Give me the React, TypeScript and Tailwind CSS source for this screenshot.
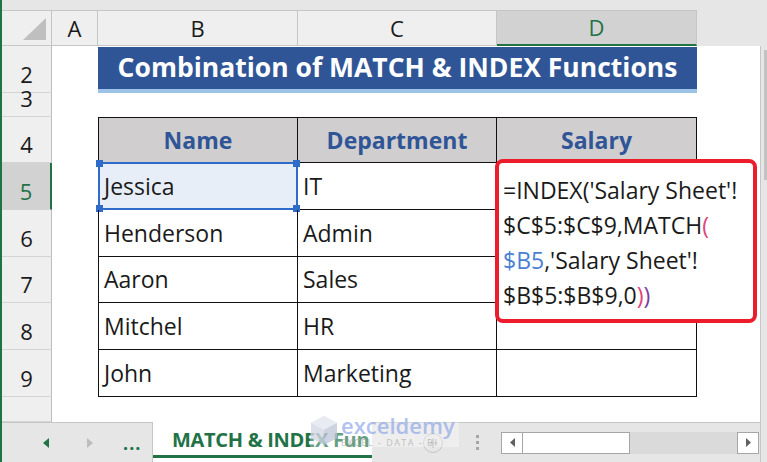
import React from "react";

const rowHeaders = [
  { label: "2", cls: "row-start-2" },
  { label: "3", cls: "row-start-3" },
  { label: "4", cls: "row-start-4" },
  { label: "5", cls: "row-start-5", active: true },
  { label: "6", cls: "row-start-6" },
  { label: "7", cls: "row-start-7" },
  { label: "8", cls: "row-start-8" },
  { label: "9", cls: "row-start-9" },
  { label: "", cls: "row-start-10" },
];

const people = [
  ["Jessica", "IT"],
  ["Henderson", "Admin"],
  ["Aaron", "Sales"],
  ["Mitchel", "HR"],
  ["John", "Marketing"],
];

function Handle({ pos }: { pos: string }) {
  return <div className={`absolute h-[7px] w-[7px] bg-[#2f6bc9] ${pos}`} />;
}

export default function App() {
  return (
    <div className="relative flex h-[462px] w-[767px] overflow-hidden bg-[#e6e6e6] font-['Open_Sans',sans-serif] text-[#1a1a1a]">
      <div className="w-[2px] bg-[#217346]" />
      <div className="flex w-[765px] flex-col">
        <div className="h-[10px]" />

        <div className="flex h-[412px]">
          {/* sheet */}
          <div className="relative grid w-[758px] grid-cols-[50px_46px_200px_199px_200px_63px] grid-rows-[36px_47px_24px_46px_47px_47px_46px_47px_47px_25px] bg-white">
            {/* column headers */}
            <div className="relative col-start-1 row-start-1 border-y border-r border-[#c6c6c6] bg-[#efefef]">
              <svg className="absolute right-[5px] bottom-[5px]" width="23" height="22" viewBox="0 0 23 22">
                <polygon points="23,0 23,22 0,22" fill="#bfbfbf" />
              </svg>
            </div>
            <div className="col-start-2 row-start-1 flex items-center justify-center border-y border-r border-[#c6c6c6] bg-[#efefef] text-[22px]">A</div>
            <div className="col-start-3 row-start-1 flex items-center justify-center border-y border-r border-[#c6c6c6] bg-[#efefef] text-[22px]">B</div>
            <div className="col-start-4 row-start-1 flex items-center justify-center border-y border-r border-[#c6c6c6] bg-[#efefef] text-[22px]">C</div>
            <div className="col-start-5 row-start-1 flex items-center justify-center border-t border-r border-[#c6c6c6] border-b-2 border-b-[#217346] bg-[#d2d2d2] text-[22px] text-[#217346]">D</div>
            <div className="col-start-6 row-start-1 bg-[#e6e6e6]" />

            {/* row headers */}
            {rowHeaders.map((r) => (
              <div
                key={r.cls}
                className={`col-start-1 ${r.cls} flex items-end justify-center border-b border-[#d4d4d4] pb-[7px] text-[22px] leading-none ${
                  r.active
                    ? "border-r-2 border-r-[#217346] bg-[#d2d2d2] text-[#217346]"
                    : "border-r border-r-[#bdbdbd] bg-[#efefef]"
                }`}
              >
                {r.label}
              </div>
            ))}

            {/* title */}
            <div className="col-start-3 col-span-3 row-start-2 mt-[1px] flex items-center justify-center border-b-4 border-[#9dc3e6] bg-[#2f5597] text-[26.5px] font-bold text-white">
              Combination of MATCH &amp; INDEX Functions
            </div>

            {/* table */}
            <div className="col-start-3 col-span-3 row-start-4 row-span-6 grid grid-cols-[200px_199px_200px] grid-rows-[46px_47px_47px_46px_47px_47px] text-[23px]">
              {["Name", "Department", "Salary"].map((h, i) => (
                <div
                  key={h}
                  className={`flex items-center justify-center border-y border-r border-[#111] bg-[#d0cece] text-[23px] font-bold text-[#2f5597] ${i === 0 ? "border-l" : ""}`}
                >
                  {h}
                </div>
              ))}
              {people.map(([name, dept], i) => (
                <React.Fragment key={name}>
                  <div className={`relative flex items-center border-b border-l border-r border-[#111] pl-[5px] ${i === 0 ? "bg-[#e8eef8]" : ""}`}>
                    {name}
                    {i === 0 && (
                      <div className="absolute top-[-1px] left-[-1px] right-[-1px] bottom-[-1px] border-2 border-[#2f6bc9]">
                        <Handle pos="-top-[4px] -left-[4px]" />
                        <Handle pos="-top-[4px] -right-[4px]" />
                        <Handle pos="-bottom-[4px] -left-[4px]" />
                        <Handle pos="-bottom-[4px] -right-[4px]" />
                      </div>
                    )}
                  </div>
                  <div className="flex items-center border-b border-r border-[#111] pl-[5px]">{dept}</div>
                  <div className="border-b border-r border-[#111]" />
                </React.Fragment>
              ))}
            </div>

            {/* formula callout */}
            <div className="absolute top-[149px] left-[493px] h-[164px] w-[262px] rounded-[8px] border-4 border-[#ec1c2c] bg-white pt-[10px] pl-[4px] text-[23px] leading-[35px] whitespace-nowrap">
              <div>=INDEX(&apos;Salary Sheet&apos;!</div>
              <div>
                $C$5:$C$9,MATCH<span className="text-[#e0457b]">(</span>
              </div>
              <div>
                <span className="text-[#4b7fd6]">$B5</span>,&apos;Salary Sheet&apos;!
              </div>
              <div>
                $B$5:$B$9,0<span className="text-[#e0457b]">)</span>
                <span className="text-[#7a3e9d]">)</span>
              </div>
            </div>
          </div>

          {/* vertical scrollbar edge */}
          <div className="relative w-[7px] bg-[#e6e6e6]">
            <div className="absolute top-[36px] bottom-0 left-0 w-px bg-[#c6c6c6]" />
            <div className="absolute top-[40px] right-0 h-[130px] w-[3px] bg-[#c2c2c2]" />
          </div>
        </div>

        {/* sheet tabs bar */}
        <div className="flex h-[40px]">
          <div className="flex w-[151px] items-center border-t border-r border-[#c6c6c6] pt-[1px]">
            <svg className="ml-[41px]" width="6" height="10" viewBox="0 0 6 10">
              <polygon points="6,0 6,10 0,5" fill="#217346" />
            </svg>
            <svg className="ml-[38px]" width="6" height="10" viewBox="0 0 6 10">
              <polygon points="0,0 0,10 6,5" fill="#bdbdbd" />
            </svg>
            <span className="ml-[30px] text-[18px] leading-none font-bold tracking-[1px] text-[#217346]">...</span>
          </div>
          <div className="flex w-[219px] flex-col bg-white">
            <div className="flex h-[36px] items-center border-b-[3px] border-[#217346] pt-[2px] pl-[19px] text-[20px] font-bold tracking-[-0.3px] whitespace-nowrap text-[#217346]">
              MATCH &amp; INDEX Fun
            </div>
          </div>
          <div className="flex w-[388px] items-center border-t border-[#c6c6c6]">
            <svg className="ml-[51px]" width="20" height="20" viewBox="0 0 20 20">
              <circle cx="10" cy="10" r="9.5" fill="none" stroke="#c4c4c4" />
              <path d="M10 5.5v9M5.5 10h9" stroke="#b0b0b0" strokeWidth="1.2" />
            </svg>
            <div className="ml-[33px] flex flex-col gap-[3px]">
              <div className="h-[3px] w-[3px] bg-[#a6a6a6]" />
              <div className="h-[3px] w-[3px] bg-[#a6a6a6]" />
              <div className="h-[3px] w-[3px] bg-[#a6a6a6]" />
            </div>
            <div className="ml-[22px] flex h-[22px] w-[258px]">
              <div className="flex w-[22px] items-center justify-center border border-[#a6a6a6] bg-white">
                <svg width="5" height="9" viewBox="0 0 5 9">
                  <polygon points="5,0 5,9 0,4.5" fill="#606060" />
                </svg>
              </div>
              <div className="w-[107px] border border-l-0 border-[#a6a6a6] bg-white" />
              <div className="flex-1 bg-[#dadada]" />
              <div className="flex w-[22px] items-center justify-center border border-[#a6a6a6] bg-white">
                <svg width="5" height="9" viewBox="0 0 5 9">
                  <polygon points="0,0 0,9 5,4.5" fill="#606060" />
                </svg>
              </div>
            </div>
          </div>
          <div className="w-[7px] border-l border-[#c6c6c6]" />
        </div>
      </div>

      {/* watermark */}
      <div className="pointer-events-none absolute top-[414px] left-[310px] flex items-center gap-[3px] bg-white/40 pr-[4px] opacity-80">
        <svg width="28" height="31" viewBox="0 0 28 31">
          <polygon points="14,1 27,8 27,23 14,30 1,23 1,8" fill="#d5d9e6" />
          <polygon points="14,1 27,8 14,15 1,8" fill="#e4e7ef" />
          <polygon points="14,15 27,8 27,23 14,30" fill="#c3c9da" />
        </svg>
        <div className="flex flex-col leading-none">
          <span className="text-[22px] font-semibold text-[#9fb3ea]">exceldemy</span>
          <span className="mt-[2px] text-[9px] tracking-[1.5px] text-[#b5b5b5]">EXCEL - DATA - BI</span>
        </div>
      </div>
    </div>
  );
}
